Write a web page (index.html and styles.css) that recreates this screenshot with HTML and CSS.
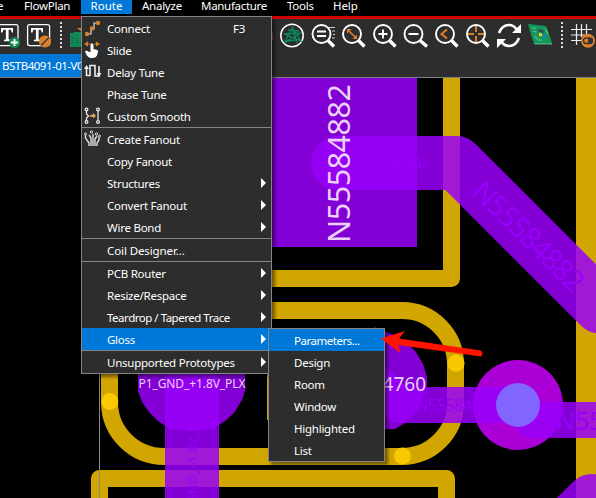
FILE: index.html
```html
<!DOCTYPE html>
<html lang="en">
<head>
<meta charset="utf-8">
<title>PCB Editor</title>
<link rel="stylesheet" href="styles.css">
</head>
<body>
<div class="app">
  <nav class="menubar">
    <span class="mb mb-cut">e</span><span class="mb mb-flow">FlowPlan</span><span class="mb mb-route">Route</span><span class="mb mb-analyze">Analyze</span><span class="mb mb-manu">Manufacture</span><span class="mb mb-tools">Tools</span><span class="mb mb-help">Help</span>
  </nav>
  <div class="toolbar">
    <svg class="icons" viewBox="0 19 596 35" width="596" height="35">
      <g fill="none" stroke="#fff" stroke-width="1.3">
        <rect x="-5" y="24.600" width="23" height="21" rx="2"/>
        <rect x="27.600" y="24.600" width="22" height="21" rx="2"/>
      </g>
      <g fill="#fff">
        <path d="M1 28h12v4.500h-1.200l-1-2.800H8.600v9.600l2 .7v1.200H3.900v-1.200l2-.7v-9.600H3.400l-1 2.800H1z"/>
        <path d="M31 28h12v4.500h-1.200l-1-2.800h-2.200v9.600l2 .7v1.200h-6.700v-1.200l2-.7v-9.600h-2.500l-1 2.800H31z"/>
      </g>
      <circle cx="14.500" cy="42.500" r="5.500" fill="#128a50"/><path d="M11 42.500h7M14.500 39v7" stroke="#fff" stroke-width="1.800"/>
      <circle cx="45" cy="41.500" r="6" fill="#dd802b"/><path d="M41 45.500l8-8" stroke="#333" stroke-width="1.300"/>
      <path d="M61 22v27M562 22v27" stroke="#ddd" stroke-width="2" stroke-dasharray="2 2"/>
      <path d="M70 33h4v-1h8v15h-12z" fill="#108a55"/><path d="M73 38h4v5h4M72 36v8" stroke="#236044" fill="none"/><path d="M77 28l4 3v-3z" fill="#dd802b"/>
      <path d="M272 33v7" stroke="#a58" stroke-width="1.500"/>
      <circle cx="292" cy="35.500" r="11.200" fill="none" stroke="#fff" stroke-width="1.500"/>
      <g fill="none" stroke="#0b875b" stroke-width="1.300"><path d="M293 26l-8 16 16-9-17 1 17 7-9-14 5 16M284 42l16-3M288 30l11 1"/></g>
      <g fill="none" stroke="#fff" stroke-width="1.900">
        <circle cx="321.500" cy="34" r="9"/><circle cx="352" cy="34" r="9"/><circle cx="383" cy="34" r="9"/><circle cx="413.500" cy="34" r="9"/><circle cx="445" cy="34" r="9"/><circle cx="476" cy="34" r="9"/>
      </g>
      <path d="M328 40.500l6 6M358.500 40.500l6 6M389.500 40.500l6 6M420 40.500l7 6M451.500 40.500l6 6M482.500 40.500l6 6" stroke="#fff" stroke-width="3.400"/>
      <path d="M317 31.500h9M317 36h9M378.500 34h9M383 29.500v9M408.500 34h10" stroke="#fff" stroke-width="1.900"/>
      <path d="M329 27.500h6M332 31h3M333 34.500h2M332 38h3" stroke="#ccc" stroke-width="1"/>
      <g stroke="#dd802b" fill="#dd802b"><path d="M348 30l8 8" stroke-width="1.600"/><path d="M347 29h4.500l-4.500 4.500zM357 39h-4.500l4.500-4.500z" stroke="none"/><path d="M447 29.500l-5.500 4.500 5.500 4.500" fill="none" stroke-width="2"/><path d="M476 26v6M476 36v6M468 34h6M478 34h6" stroke-width="1.900"/></g>
      <g fill="none" stroke="#fff" stroke-width="2.600"><path d="M499 33q3-8 10-8 5 0 8 5M519 38q-3 8-10 8-5 0-8-5"/></g>
      <path d="M521 24v9h-9zM497 48v-9h9z" fill="#fff"/>
      <path d="M528 24l18 2 6 17-18 1z" fill="#13985b"/><path d="M534 43l18 0v1.500h-17z" fill="#4ab07c"/><path d="M533 31l3 1M532 28h4M546 29l2 5M537 40h5M535 36l2 3" stroke="#6cbd90" stroke-width="1.200"/><path d="M538 29l5 1 1 3-5-1z" fill="#2b4c50"/><path d="M539 33l3 .5v3l-3-.5z" fill="#f4cc22"/><path d="M543 34l3 1v3l-3-1z" fill="#2a77d1"/>
      <path d="M571 29.500h21M571 35h14M571 40.500h10M576.500 24v21M581.500 24v13M586.500 24v10" stroke="#eee" stroke-width="1.200"/>
      <circle cx="588" cy="40.800" r="7" fill="#dd802b"/><rect x="583.500" y="38" width="9" height="5.500" rx="2.700" fill="none" stroke="#333" stroke-width="1.300"/><path d="M588 38h2q3 0 3 2.700t-3 2.700h-2z" fill="#333"/>
    </svg>
    <div class="tabs"><span class="tab">BSTB4091-01-V0</span></div>
  </div>
  <svg class="board" viewBox="0 78 596 420" width="596" height="420">
    <g class="copper">
      <path d="M451.500 70V278.500H200"/>
      <path d="M200 310.500H402A53.500 53.500 0 0 1 455.500 364V403A53.500 53.500 0 0 1 402 456.500H164A54.500 54.500 0 0 1 109.500 402V340"/>
      <path d="M99.500 510V478.500H446.500V510"/>
    </g>
    <path class="gold" d="M576 78h20v420h-20zM267 374h1v46h-1z"/>
    <g class="dots"><circle cx="109.800" cy="401.500" r="8.500"/><circle cx="456" cy="363.300" r="8.500"/><circle cx="402.500" cy="456" r="8.500"/></g>
    <path d="M99.500 374V498" stroke="#888"/>
    <circle cx="518" cy="405" r="45" fill="#aa00d7"/>
    <g class="layer">
      <path d="M200 78H417V247H200z"/>
      <path d="M138 374V391L142 402L149 412L158 421L170 429L178 430H205L213 429L225 421L234 413L242 400L245 391V374z"/>
      <path d="M374 327L396 336L410 346L416 352L423 364L427 377V386L425 393L419 407L413 415L405 423L395 429H374z"/>
    </g>
    <g class="trace">
      <path class="wide" d="M338 163H456.500L600 306.500"/>
      <path class="wide" d="M192 340V510"/>
      <path class="wide" d="M592 501L500 593"/>
      <path class="thin" d="M374 380L399 405H518"/>
      <path class="thin" d="M518 405L533 420H610"/>
    </g>
    <g class="net">
      <text x="366" y="168" font-size="12" textLength="62">N55584882</text>
      <text font-size="29" textLength="144" transform="translate(470 193) rotate(44.500)">N55584882</text>
      <text font-size="12.500" textLength="112" transform="translate(197 523) rotate(-90)">P1_GND_+1.8V_PLX</text>
      <text x="416" y="411" font-size="16" textLength="82">N55584882</text>
      <text x="556" y="430" font-size="25">N55</text>
    </g>
    <circle cx="518" cy="405" r="22" fill="#8264ff"/>
    <g class="pin">
      <text font-size="30.500" textLength="159" transform="translate(350 243) rotate(-90)">N55584882</text>
      <text x="138.500" y="388" font-size="12" textLength="107">P1_GND_+1.8V_PLX</text>
      <text x="426" y="391" font-size="19" text-anchor="end">N55584760</text>
    </g>
  </svg>

  <div class="menu main-menu">
    <div class="item"><svg class="ico" viewBox="0 0 18 18"><path d="M3 15h4v-5h3V4h5" fill="none" stroke="#ddd" stroke-width="1.200"/><g fill="#dd802b"><circle cx="8" cy="9.500" r="2.200"/><circle cx="14" cy="4" r="2.200"/><circle cx="3" cy="15" r="2.200"/></g></svg><span>Connect</span><kbd>F3</kbd></div>
    <div class="item"><svg class="ico" viewBox="0 0 18 18"><path d="M0 3l4-2.500v5zM16 3l-4-2.500v5z" fill="#dd802b"/><path d="M3 3h3M10 3h3" stroke="#dd802b"/><path d="M6.500 3q1.500-2 3 1v4l4 1q1 1 0 4-1 4-5 4H6Q2 15 1 10q2-1 4 1l1.500 0z" fill="#fff"/></svg><span>Slide</span></div>
    <div class="item"><svg class="ico" viewBox="0 0 18 18"><path d="M2.500 13V3.500M2.500 12.500H6M6 13V2.500h5V13h4V3" fill="none" stroke="#eee" stroke-width="1.600"/><path d="M0 6l2.500-4L5 6zM12.500 10h5L15 14z" fill="#eee"/></svg><span>Delay Tune</span></div>
    <div class="item"><span>Phase Tune</span></div>
    <div class="item"><svg class="ico" viewBox="0 0 18 18"><g fill="none" stroke="#eee" stroke-width="1.200"><path d="M2.500 3v4l2 2-2 2v3M14 4v9"/><circle cx="2.500" cy="2.500" r="1.400"/><circle cx="2.500" cy="15" r="1.400"/><circle cx="14" cy="2.500" r="1.400"/><circle cx="14" cy="15" r="1.400"/></g><path d="M5 10q1-3 4-2.500V6l3 3-3 2.500V9.500z" fill="#e5ad62"/></svg><span>Custom Smooth</span></div>
    <div class="item sep"><svg class="ico" viewBox="0 0 18 18"><g fill="none" stroke="#ddd" stroke-width="1.400"><path d="M5 16v-3L1.500 8V5M7 16V8L5 5M9 16V4M11 16V9l2-3M13 16v-3l2-3V7"/></g><g fill="none" stroke="#ddd"><circle cx="1.500" cy="4" r="1"/><circle cx="7.500" cy="2" r="1.200"/><circle cx="12.500" cy="4" r="1.200"/><circle cx="15.500" cy="6" r="1"/></g></svg><span>Create Fanout</span></div>
    <div class="item"><span>Copy Fanout</span></div>
    <div class="item sub"><span>Structures</span></div>
    <div class="item sub"><span>Convert Fanout</span></div>
    <div class="item sub"><span>Wire Bond</span></div>
    <div class="item sep"><span class="wider">Coil Designer...</span></div>
    <div class="item sep sub"><span>PCB Router</span></div>
    <div class="item sub"><span>Resize/Respace</span></div>
    <div class="item sub"><span class="tight">Teardrop / Tapered Trace</span></div>
    <div class="item sub active"><span>Gloss</span></div>
    <div class="item sep sub"><span>Unsupported Prototypes</span></div>
  </div>

  <div class="menu sub-menu">
    <div class="item active"><span class="tight">Parameters...</span></div>
    <div class="item"><span>Design</span></div>
    <div class="item"><span>Room</span></div>
    <div class="item"><span>Window</span></div>
    <div class="item"><span>Highlighted</span></div>
    <div class="item"><span>List</span></div>
  </div>

  <svg class="arrow" viewBox="0 0 106 30" width="106" height="30"><path d="M1 9.500L25 2L19 9.500L101 21.500Q104 24.500 101 27.500L18 16L21 24.500z" fill="#ff1400"/></svg>
</div>
</body>
</html>
```

FILE: styles.css
```css
* { box-sizing: border-box; }
body {
  margin: 0;
  background: #000;
  font-family: "Noto Sans", "Open Sans", sans-serif;
  font-size: 11.5px;
  letter-spacing: -0.25px;
  color: #fff;
}
.app {
  position: relative;
  width: 596px;
  height: 498px;
  overflow: hidden;
}
.menubar {
  display: flex;
  height: 19px;
  border-bottom: 3px solid #d20000;
}
.mb {
  height: 16px;
  line-height: 11px;
  white-space: nowrap;
  flex: none;
}
.mb-cut { width: 24px; margin-left: -3px; margin-right: 3px; }
.mb-flow { width: 57px; }
.mb-route { width: 51px; height: 14px; background: #0078d7; text-align: center; letter-spacing: 0; }
.mb-analyze { width: 69px; padding-left: 10px; }
.mb-manu { width: 86px; letter-spacing: -0.3px; }
.mb-tools { width: 46px; }
.mb-help { letter-spacing: -0.1px; }
.toolbar {
  height: 59px;
  background: #2d2d2d;
  border-bottom: 1px solid #808080;
}
.icons { display: block; }
.tabs { display: flex; }
.tab {
  width: 100px;
  height: 23px;
  padding-left: 2px;
  line-height: 23px;
  background: #0078d7;
  letter-spacing: -0.5px;
  white-space: nowrap;
}
.board { display: block; letter-spacing: 0; }
.copper path {
  fill: none;
  stroke: #d2a600;
  stroke-width: 17px;
  stroke-linejoin: round;
}
.gold { fill: #d2a600; }
.dots { fill: #fac800; }
.layer path { fill: #9900fa; fill-opacity: .85; }
.trace path {
  fill: none;
  stroke: #9900fa;
  stroke-opacity: .85;
  stroke-linecap: round;
  stroke-linejoin: round;
}
.trace .wide { stroke-width: 54px; }
.trace .thin { stroke-width: 36px; }
.net { fill: #9900fa; }
.pin { fill: #ecd0fa; }
.menu {
  position: absolute;
  background: #2d2d2d;
  border: 1px solid #858585;
  box-shadow: 3px 3px 3px rgba(0, 0, 0, .45);
}
.main-menu { left: 81px; top: 16px; width: 191px; height: 358px; }
.sub-menu { left: 268px; top: 328px; width: 117px; height: 134px; }
.item {
  position: relative;
  display: flex;
  align-items: center;
  height: 22px;
  padding: 0 0 0 25px;
  white-space: nowrap;
}
.item.sep { height: 23px; border-top: 1px solid #858585; }
.active { background: #0078d7; }
.tight { letter-spacing: -0.48px; }
.wider { letter-spacing: -0.1px; }
.ico {
  position: absolute;
  left: 2px;
  top: 2px;
  width: 18px;
  height: 18px;
}
.item kbd {
  font: inherit;
  margin-left: auto;
  margin-right: 26px;
}
.sub::after {
  content: "";
  position: absolute;
  right: 5px;
  top: 6px;
  border-left: 5px solid #fff;
  border-top: 5px solid transparent;
  border-bottom: 5px solid transparent;
}
.arrow { position: absolute; left: 380px; top: 329px; }
```
